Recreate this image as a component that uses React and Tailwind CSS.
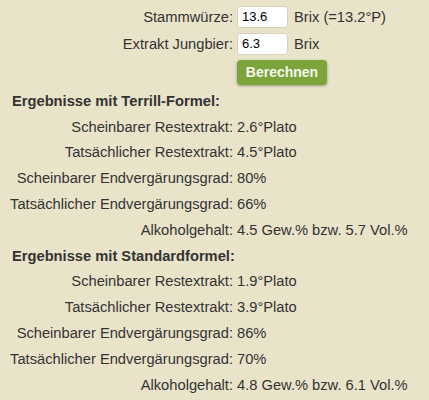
import React from 'react';

const terrill = [
    ['Scheinbarer Restextrakt:', '2.6°Plato'],
    ['Tatsächlicher Restextrakt:', '4.5°Plato'],
    ['Scheinbarer Endvergärungsgrad:', '80%'],
    ['Tatsächlicher Endvergärungsgrad:', '66%'],
    ['Alkoholgehalt:', '4.5 Gew.% bzw. 5.7 Vol.%'],
];

const standard = [
    ['Scheinbarer Restextrakt:', '1.9°Plato'],
    ['Tatsächlicher Restextrakt:', '3.9°Plato'],
    ['Scheinbarer Endvergärungsgrad:', '86%'],
    ['Tatsächlicher Endvergärungsgrad:', '70%'],
    ['Alkoholgehalt:', '4.8 Gew.% bzw. 6.1 Vol.%'],
];

function ResultRow({ label, value }) {
    return (
        <div className="flex items-center h-[25.8px]">
            <div className="w-[233px] text-right whitespace-nowrap">{label}</div>
            <div className="pl-[4px] whitespace-nowrap">{value}</div>
        </div>
    );
}

function InputRow({ label, value, unit, className = '' }) {
    return (
        <div className={`flex items-center h-[24px] ${className}`}>
            <div className="w-[233px] text-right">{label}</div>
            <div className="pl-[4px] flex items-center">
                <input
                    type="text"
                    defaultValue={value}
                    className="w-[51px] h-[22px] bg-white border border-[#d6d2c0] rounded-[3px] px-[4px] text-[13px] text-black outline-none"
                />
                <span className="ml-[6px]">{unit}</span>
            </div>
        </div>
    );
}

export default function App() {
    return (
        <div
            className="w-[429px] h-[400px] bg-[#e9e3c9] text-[#333] text-[14.7px] pt-[5px] overflow-hidden"
            style={{ fontFamily: '"Liberation Sans", Arial, sans-serif' }}
        >
            <InputRow label="Stammwürze:" value="13.6" unit="Brix (=13.2°P)" />
            <InputRow label="Extrakt Jungbier:" value="6.3" unit="Brix" className="mt-[3px]" />

            <div className="pl-[237px] mt-[4px]">
                <button className="w-[90px] h-[25px] rounded-[4px] bg-[#7ba53a] text-[#f4f7ec] font-bold text-[14px] shadow-[0_1px_3px_rgba(0,0,0,0.35)]">
                    Berechnen
                </button>
            </div>

            <div className="mt-[3px]">
                <div className="h-[25.8px] flex items-center pl-[12px] font-bold">Ergebnisse mit Terrill-Formel:</div>
                {terrill.map(([l, v]) => <ResultRow key={l} label={l} value={v} />)}
                <div className="h-[25.8px] flex items-center pl-[12px] font-bold">Ergebnisse mit Standardformel:</div>
                {standard.map(([l, v]) => <ResultRow key={l + v} label={l} value={v} />)}
            </div>
        </div>
    );
}
